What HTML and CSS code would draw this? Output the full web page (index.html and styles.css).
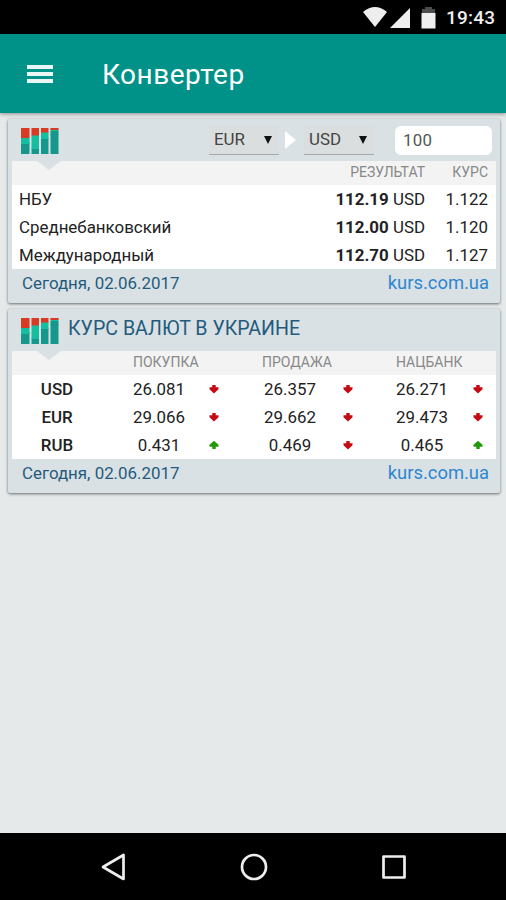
FILE: index.html
```html
<!DOCTYPE html>
<html lang="ru">
<head>
  <meta charset="UTF-8">
  <meta name="viewport" content="width=device-width, initial-scale=1.0">
  <title>Конвертер</title>
  <link rel="stylesheet" href="styles.css">
</head>
<body>
  <!-- Bar chart logo, used by both cards -->
  <svg class="sprite" width="0" height="0">
    <symbol id="logo" viewBox="0 0 38 27">
      <path fill="#16978c" d="M0 15h8.500v12H0zM10.500 21h7.500v6h-7.500zM20 11h7.500v16H20zM29.500 7h8v20h-8z"/>
      <path fill="#14bea0" d="M0 10h8.500v7H0zM10.500 8h7.500v14h-7.500zM20 5h7.500v7H20zM29.500 2h8v2.500h-8z"/>
      <path fill="#16978c" d="M29.500 4h8v4h-8z"/>
      <path fill="#d83a24" d="M0 1h8.500v10H0zM10.500 1h7.500v7.500h-7.500zM20 1h7.500v4.500H20zM29.500 1h8v2h-8z"/>
    </symbol>
    <symbol id="down" viewBox="0 0 10 10">
      <path fill="#c40a12" d="M3.300 1h3.400v2.300h2.800v2L5 9.500.5 5.300v-2h2.800z"/>
    </symbol>
    <symbol id="up" viewBox="0 0 10 10">
      <path fill="#229a08" d="M3.300 9h3.400V6.700h2.800v-2L5 .7.500 4.700v2h2.800z"/>
    </symbol>
  </svg>

  <div class="status-bar">
    <svg class="wifi" width="26" height="20" viewBox="0 0 26 20"><path fill="#eee" d="M1 5Q13-5 25 5L13 20z"/></svg>
    <svg class="signal" width="20" height="20" viewBox="0 0 20 20"><path fill="#eee" d="M0 20L20 0v20z"/></svg>
    <svg class="battery" width="15" height="22" viewBox="0 0 15 22"><path fill="#4c4c4c" d="M4 0h7v2h3v4H1V2h3z"/><path fill="#eee" d="M.5 6h14v15.500H.5z"/></svg>
    <span class="time">19:43</span>
  </div>

  <header>
    <div class="menu-icon"><i></i><i></i><i></i></div>
    <h1>Конвертер</h1>
  </header>

  <main>
    <section class="card">
      <div class="card-head">
        <svg class="logo" width="38" height="27"><use href="#logo"/></svg>
        <div class="select from">EUR<i></i></div>
        <span class="arrow-right"></span>
        <div class="select to">USD<i></i></div>
        <div class="amount">100</div>
      </div>
      <div class="card-body">
        <div class="row convert titles"><span></span><span>РЕЗУЛЬТАТ</span><span>КУРС</span></div>
        <div class="row convert"><span class="name">НБУ</span><span><b>112.19</b> USD</span><span>1.122</span></div>
        <div class="row convert"><span class="name">Среднебанковский</span><span><b>112.00</b> USD</span><span>1.120</span></div>
        <div class="row convert"><span class="name">Международный</span><span><b>112.70</b> USD</span><span>1.127</span></div>
      </div>
      <div class="card-foot"><span>Сегодня, 02.06.2017</span><a>kurs.com.ua</a></div>
    </section>

    <section class="card">
      <div class="card-head">
        <svg class="logo" width="38" height="27"><use href="#logo"/></svg>
        <h2>КУРС ВАЛЮТ В УКРАИНЕ</h2>
      </div>
      <div class="card-body">
        <div class="row rates titles"><span></span><span class="wide">ПОКУПКА</span><span class="wide sell">ПРОДАЖА</span><span class="wide">НАЦБАНК</span></div>
        <div class="row rates">
          <b>USD</b>
          <span class="rate">26.081</span><svg class="trend"><use href="#down"/></svg>
          <span class="rate">26.357</span><svg class="trend"><use href="#down"/></svg>
          <span class="rate">26.271</span><svg class="trend"><use href="#down"/></svg>
        </div>
        <div class="row rates">
          <b>EUR</b>
          <span class="rate">29.066</span><svg class="trend"><use href="#down"/></svg>
          <span class="rate">29.662</span><svg class="trend"><use href="#down"/></svg>
          <span class="rate">29.473</span><svg class="trend"><use href="#down"/></svg>
        </div>
        <div class="row rates">
          <b>RUB</b>
          <span class="rate">0.431</span><svg class="trend"><use href="#up"/></svg>
          <span class="rate">0.469</span><svg class="trend"><use href="#down"/></svg>
          <span class="rate">0.465</span><svg class="trend"><use href="#up"/></svg>
        </div>
      </div>
      <div class="card-foot"><span>Сегодня, 02.06.2017</span><a>kurs.com.ua</a></div>
    </section>
  </main>

  <nav>
    <svg width="26" height="28" viewBox="0 0 26 28"><path d="M23.500 2v24L3 14z"/></svg>
    <svg width="28" height="28" viewBox="0 0 28 28"><circle cx="14" cy="14" r="12"/></svg>
    <svg width="26" height="28" viewBox="0 0 26 28"><rect x="2.500" y="3.500" width="21" height="21"/></svg>
  </nav>
</body>
</html>
```
FILE: styles.css
```css
* {
  box-sizing: border-box;
}

body {
  display: flex;
  flex-direction: column;
  height: 900px;
  margin: 0;
  font-family: Roboto, sans-serif;
  font-size: 16.9px;
  color: #222;
  background-color: #e5e9ea;
}

.sprite {
  position: absolute;
}

.status-bar {
  display: flex;
  align-items: center;
  justify-content: flex-end;
  height: 34px;
  padding-right: 11px;
  background-color: #000;
  color: #eee;
}

.signal {
  margin: 1px 11px 0 2px;
}

.battery {
  margin-right: 10px;
  margin-top: 1px;
}

.time {
  width: 49px;
  margin-top: 1px;
  font-size: 19px;
  font-weight: 500;
  letter-spacing: 0.2px;
}

header {
  display: flex;
  align-items: center;
  height: 79px;
  padding-left: 27px;
  background-color: #009188;
  color: #fff;
  box-shadow: 0 1px 4px rgba(0, 0, 0, 0.4);
}

.menu-icon {
  display: flex;
  flex-direction: column;
  gap: 3px;
  width: 26px;
  margin-right: 49px;
}

.menu-icon i {
  height: 4px;
  background-color: #e9f6f5;
}

h1 {
  margin: 1px 0 0;
  font-size: 28px;
  font-weight: 400;
  letter-spacing: 0.5px;
}

main {
  flex: 1;
  padding: 6px 6px 0 8px;
}

.card {
  height: 184px;
  margin-bottom: 6px;
  padding: 0 4px;
  background-color: #dae1e4;
  border-radius: 2px;
  box-shadow: 0 1px 3px rgba(0, 0, 0, 0.55);
}

.card-head {
  display: flex;
  align-items: center;
  height: 42px;
  padding-left: 9px;
}

.select {
  display: flex;
  align-items: center;
  justify-content: space-between;
  width: 70px;
  height: 29px;
  padding: 0 7px 1px 5px;
  border-bottom: 1px solid #aaa;
  background-color: #dbdedf;
  color: #444;
}

.select i {
  border: 4.5px solid transparent;
  border-top: 8px solid #111;
  border-bottom: 0;
  margin-top: 2px;
}

.from {
  margin-left: 150px;
}

.arrow-right {
  margin: 0 8px 0 6px;
  border: 9px solid transparent;
  border-left: 11px solid #fff;
  border-right: 0;
}

.amount {
  width: 97px;
  height: 29px;
  margin-left: 21px;
  padding-left: 8px;
  line-height: 29px;
  letter-spacing: 0.2px;
  border-radius: 6px;
  background-color: #fff;
  color: #555;
}

h2 {
  margin: 0 0 3px 9px;
  font-size: 19.6px;
  font-weight: 400;
  color: #245b7d;
}

.card-body {
  position: relative;
  background-color: #fff;
}

/* notch under the logo */
.card-body::before {
  content: "";
  position: absolute;
  top: 0;
  left: 25px;
  border: 12px solid transparent;
  border-top: 9px solid #dae1e4;
  border-bottom: 0;
}

.row {
  display: grid;
  align-items: center;
  height: 28px;
  padding-bottom: 1px;
}

.row.titles {
  height: 24px;
  padding-bottom: 3px;
  background-color: #f3f3f3;
  color: #888;
  font-size: 14px;
}

.convert {
  grid-template-columns: 1fr 180px 63px;
  padding: 0 8px 0 7px;
  text-align: right;
}

.convert .name {
  text-align: left;
}

.rates {
  grid-template-columns: 121px 76px 55px 79px 53px 77px 1fr;
}

.rates b {
  width: 90px;
  text-align: center;
  font-weight: 500;
}

.rates .wide {
  grid-column: span 2;
}

.rates .sell {
  margin-left: -2px;
}

.rate {
  width: 52px;
  text-align: center;
}

.trend {
  width: 10px;
  height: 10px;
}

.card-foot {
  display: flex;
  justify-content: space-between;
  padding: 3px 7px 0 10px;
  line-height: 22px;
  color: #245b7d;
}

.card-foot a {
  font-size: 18.4px;
  color: #2d87d0;
}

nav {
  display: flex;
  align-items: center;
  justify-content: space-between;
  height: 67px;
  padding: 0 99px 0 100px;
  background-color: #000;
}

nav svg {
  fill: none;
  stroke: #eee;
  stroke-width: 2.7;
  stroke-linejoin: round;
}
```
